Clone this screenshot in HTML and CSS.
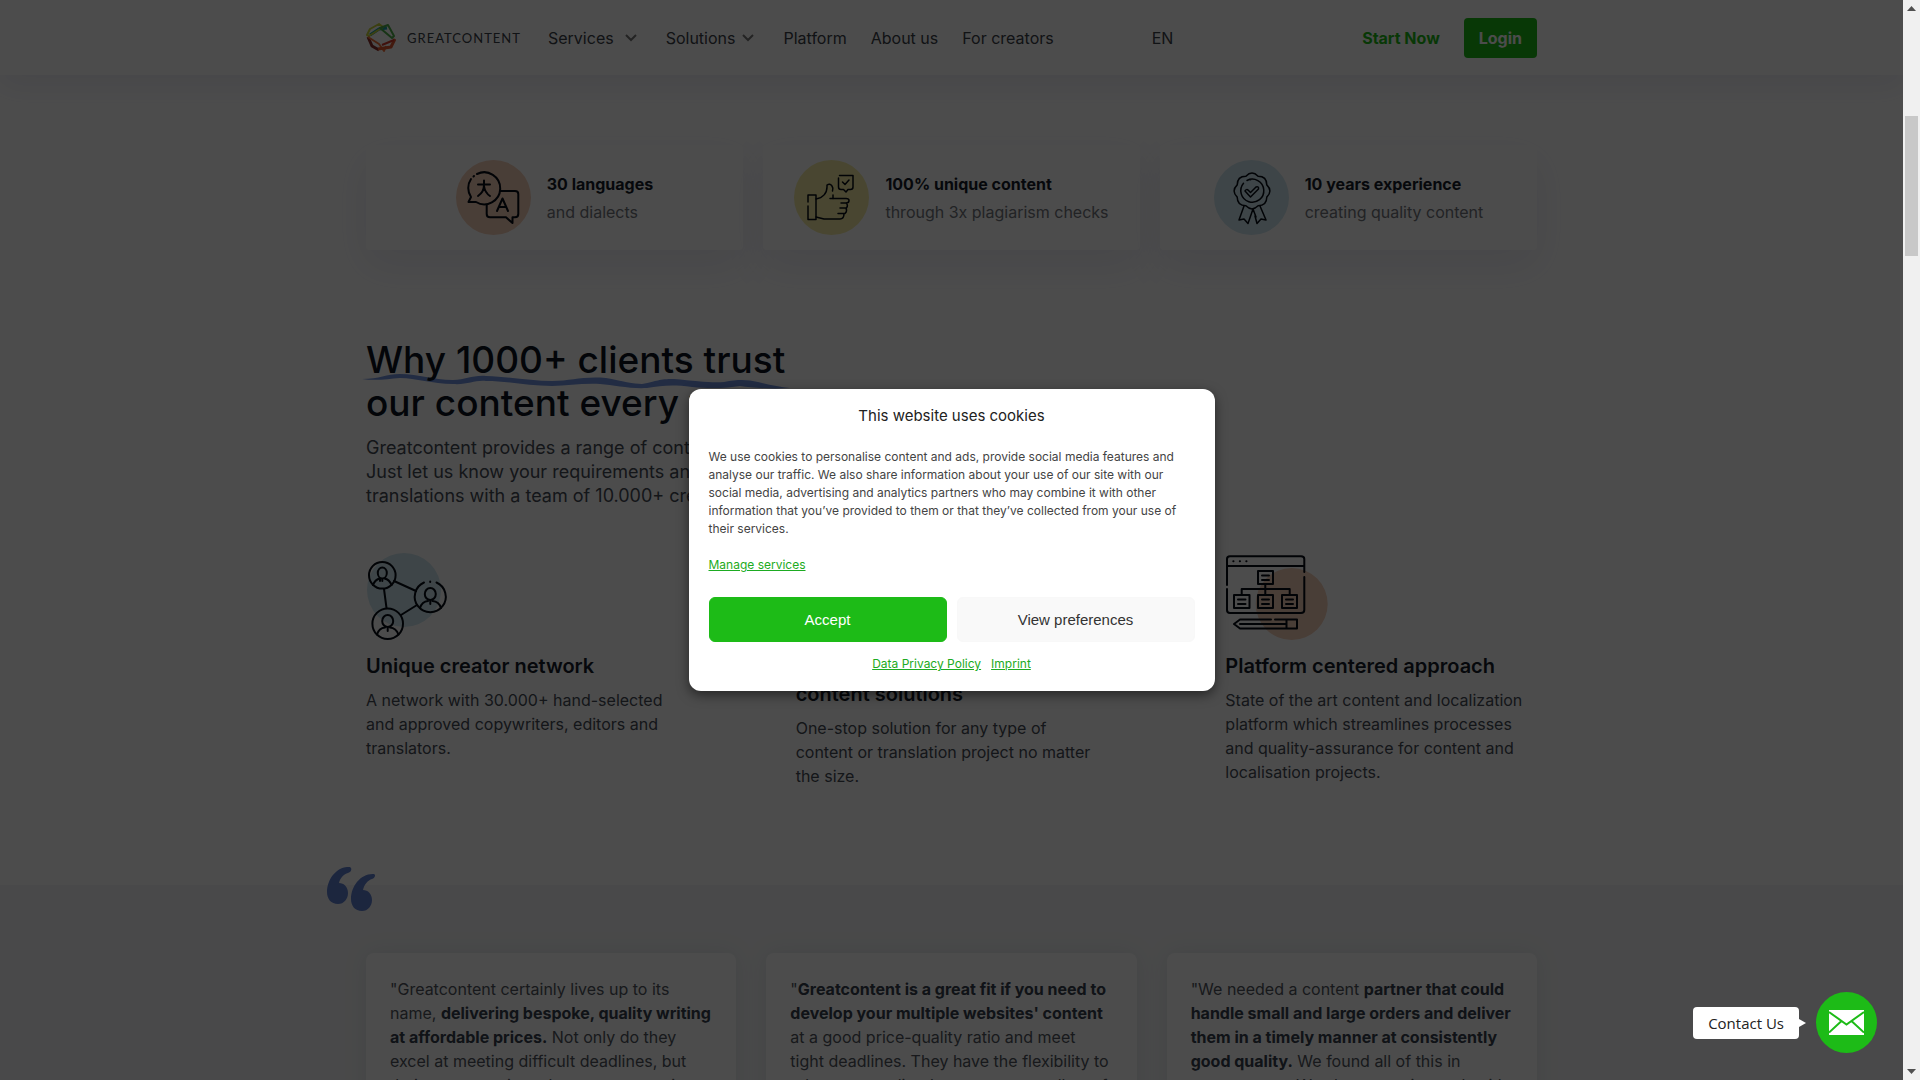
FILE: index.html
```html
<!DOCTYPE html>
<html lang="en">
<head>
  <meta charset="UTF-8">
  <meta name="viewport" content="width=device-width, initial-scale=1.0">
  <title>greatcontent</title>
  <link rel="stylesheet" href="styles.css">
</head>
<body>
<div class="page">

  <header class="header">
    <div class="container header-inner">
      <a href="#" class="logo">
        <svg width="30" height="30" viewBox="0 0 30 30" fill="none" stroke-width="2" stroke-linejoin="round">
          <path d="M4 12 L13 6 L21 5" stroke="#18a0a8" stroke-width="3"/>
          <path d="M1 12 L4 6 L13 1 L17 4 L3 13 Z" stroke="#c8d63a"/>
          <path d="M14 5 L22 2 L28 13 L26 15 Z" stroke="#4fae4a"/>
          <path d="M2 14 L6 23 L13 27" stroke="#8b2f2c" stroke-width="3"/>
          <path d="M2 14 L13 21 L18 28 L20 23" stroke="#f0713a"/>
          <path d="M29 16 L25 24 L12 26" stroke="#e2572f" stroke-width="3"/>
          <path d="M28 17 L16 22" stroke="#d33b2c"/>
        </svg>
        <span>GREATCONTENT</span>
      </a>
      <nav class="nav">
        <a href="#" class="has-sub">Services
          <svg width="14" height="8" viewBox="0 0 14 8"><path d="M2 1 L7 6 L12 1"/></svg>
        </a>
        <a href="#" class="has-sub tight">Solutions
          <svg width="14" height="8" viewBox="0 0 14 8"><path d="M2 1 L7 6 L12 1"/></svg>
        </a>
        <a href="#">Platform</a>
        <a href="#">About us</a>
        <a href="#">For creators</a>
      </nav>
      <a href="#" class="lang">EN</a>
      <div class="actions">
        <a href="#" class="start">Start Now</a>
        <a href="#" class="login">Login</a>
      </div>
    </div>
  </header>

  <main>
    <section class="container stats">
      <div class="stat">
        <svg class="stat-icon" viewBox="0 0 75 75">
          <circle class="blob orange" cx="37.500" cy="37.500" r="37.500"/>
          <path d="M21 14 A16 16 0 1 1 20 42 L12.500 42 L15 37 A16 16 0 0 1 15 19"/>
          <path d="M17.500 16.500 L18 16"/>
          <path d="M22 24.500 H34 M28 20.500 V25 C28 30 25 34 22 36 M28 26 C28.500 30 31 34 34 36"/>
          <path d="M44 31 H59 Q62.300 31 62.300 34 V54 Q62.300 57.300 59 57.300 H56.500 V63 L50 57.300 H34 Q30.700 57.300 30.700 54 V45"/>
          <path d="M41 51 L46.500 38.500 L52 51 M43 47 H50"/>
        </svg>
        <div>
          <h3>30 languages</h3>
          <p>and dialects</p>
        </div>
      </div>
      <div class="stat">
        <svg class="stat-icon thin" viewBox="0 0 75 75">
          <circle class="blob yellow" cx="37.500" cy="37.500" r="37.500"/>
          <path d="M14 42 V35 H22 V59.500 H14 V46"/>
          <path d="M22 39 C29 38 33 33 33 27 V25 Q36 23 38 26 Q39.500 28 38.500 31 M39 35 V38.500"/>
          <path d="M36 38.500 H52 Q55 38.500 55 40.500 Q55 43 52 43 H47 M52 43 Q54.500 45 52.500 48 H46 M52 48 Q53.500 51 51 53.500 H44 M50 53.500 Q50 59 46 59 H30 L22 57"/>
          <path d="M44.500 18 V27 Q44.500 29.500 47 29.500 H49.500 L52 32 L54 29.500 H56.500 Q59 29.500 59 27 V15.500 H45.500 M48.500 22 L51 24.500 L55 20"/>
        </svg>
        <div>
          <h3>100% unique content</h3>
          <p>through 3x plagiarism checks</p>
        </div>
      </div>
      <div class="stat">
        <svg class="stat-icon thin" viewBox="0 0 75 75">
          <circle class="blob blue" cx="37.500" cy="37.500" r="37.500"/>
          <g transform="translate(38 31)">
            <path d="M-6.100 -14.800 Q0 -21 6.100 -14.800 Q14.800 -14.800 14.800 -6.100 Q21 0 14.800 6.100 Q14.800 14.800 6.100 14.800 Q0 21 -6.100 14.800 Q-14.800 14.800 -14.800 6.100 Q-21 0 -14.800 -6.100 Q-14.800 -14.800 -6.100 -14.800 Z"/>
            <path d="M-5 -10.500 A11.500 11.500 0 1 1 -8.500 -7.700 M-2 -11.300 L-1 -11.500"/>
            <path d="M-7 0 Q-5.500 -2.500 -3.500 -0.500 L-1.500 1.500 L4 -4 Q7 -5 6.500 -2 L-1.500 6 Z"/>
            <path d="M-8 15 L-13 29 L-8 28 L-4 32.500 L1 18 M8 15 L14 29 L9 28 L5 32.500 L3 25 M1 18 L4 26"/>
          </g>
        </svg>
        <div>
          <h3>10 years experience</h3>
          <p>creating quality content</p>
        </div>
      </div>
    </section>

    <section class="container why">
      <h2>
        <svg class="underline" width="430" height="18" viewBox="0 0 430 18"><path d="M0 7 C18 7 24 2 38 2 C58 2 70 8 91 8 C104 8 110 3 124 4 C150 5 170 9 190 9 C210 9 220 4 244 6 C260 9 272 12 280 12 C296 9 296 7 312 7 C334 9 350 11 362 10 C378 7 386 8 396 10 C408 13 418 15 428 16 C410 17 390 16 378 14 C366 16 350 17 330 15 C308 12 300 14 285 16 C268 17 252 13 238 12 C220 11 206 14 190 14 C166 14 146 9 124 9 C112 8 106 13 91 12 C70 12 54 6 38 6 C26 7 14 9 0 7 Z"/></svg>
        Why 1000+ clients trust<br>our content every year
      </h2>
      <p class="lead">Greatcontent provides a range of content and translation services.<br>Just let us know your requirements and we deliver texts and<br>translations with a team of 10.000+ creators.</p>

      <div class="features">
        <article>
          <svg class="feature-icon" viewBox="0 0 104 88">
            <circle class="blob blue" cx="38" cy="38" r="37"/>
            <path d="M28 29 L50 39 M18 37 L20.500 56 M35 63 L51 53"/>
            <circle cx="16.300" cy="23.300" r="13.300"/>
            <ellipse cx="16.300" cy="21" rx="4.500" ry="5.500"/>
            <path d="M7 33 Q9 27.500 14 26.500 V29 M18.500 26.500 Q23.500 27.500 25.500 33 M16.300 27 V29"/>
            <path d="M58 30.500 A15.500 15.500 0 1 0 70.500 30.500"/>
            <path d="M64.200 29.500 V30"/>
            <ellipse cx="64.300" cy="42" rx="5.500" ry="6"/>
            <path d="M54 56 Q56 49.500 62 49 M66.500 49 Q73 49.500 75 56 M64.300 48.500 V52"/>
            <circle cx="21.700" cy="71.700" r="15.300"/>
            <ellipse cx="21.700" cy="69" rx="5.500" ry="6"/>
            <path d="M11 82.500 Q13 76 19 75.500 M24 75.500 Q30 76 32.500 82.500 M21.700 75.500 V79"/>
          </svg>
          <h3>Unique creator network</h3>
          <p>A network with 30.000+ hand-selected and approved copywriters, editors and translators.</p>
        </article>
        <article>
          <svg class="feature-icon" viewBox="0 0 104 88">
            <circle class="blob yellow" cx="38" cy="45" r="37"/>
            <path d="M10 20 H60 V74 H10 Z M20 34 H50 M20 46 H50 M20 58 H40"/>
          </svg>
          <h3>Customised<br>content solutions</h3>
          <p>One-stop solution for any type of content or translation project no matter the size.</p>
        </article>
        <article>
          <svg class="feature-icon" viewBox="0 0 104 88">
            <circle class="blob orange" cx="66.700" cy="52" r="36"/>
            <path d="M2 33 V7 Q2 4.300 5 4.300 H76 Q79.300 4.300 79.300 7 V20 M79.300 25 V58 Q79.300 61 76 61 H5 Q2 61 2 58 V37 M2 14 H79"/>
            <path d="M8.300 9.300 H8.500 M14.800 9.300 H15 M21.300 9.300 H21.500"/>
            <path d="M33 19 H48 V32 H33 Z M9 43 H24.500 V56 H9 Z M33 43 H48 V56 H33 Z M57 43 H72 V56 H57 Z"/>
            <path d="M37 23.500 H44 M37 28 H44 M13 47.500 H20.500 M13 52 H20.500 M37 47.500 H44 M37 52 H44 M61 47.500 H68 M61 52 H68"/>
            <path d="M40.300 32 V43 M16.700 42 V37 H64.700 V42"/>
            <path d="M72 67.500 V76.500 H15 L9 72 L15 67.500 H46 M50 67.500 H72 M61.500 67.500 V76 M15 72 H60"/>
          </svg>
          <h3>Platform centered approach</h3>
          <p>State of the art content and localization platform which streamlines processes and quality-assurance for content and localisation projects.</p>
        </article>
      </div>
    </section>

    <section class="quotes">
      <div class="container quotes-inner">
        <svg class="quote-mark" width="48" height="44" viewBox="0 0 48 44">
          <path d="M23 0 C10 -1 0 12 0 25 C0 32 4 37 11 37 C17 37 21 32 21 26 C21 20 17 16 12 16 C13 11 17 7 21 6 C25 5 25 1 23 0 Z"/>
          <path d="M47 7 C34 6 24 19 24 32 C24 39 28 44 35 44 C41 44 45 39 45 33 C45 27 41 23 36 23 C37 18 41 13 45 12 C48 11 49 8 47 7 Z"/>
        </svg>
        <blockquote>"Greatcontent certainly lives up to its name, <b>delivering bespoke, quality writing at affordable prices.</b> Not only do they excel at meeting difficult deadlines, but their team consistently stays responsive.</blockquote>
        <blockquote>"<b>Greatcontent is a great fit if you need to develop your multiple websites' content</b> at a good price-quality ratio and meet tight deadlines. They have the flexibility to adapt to any client's request, as well as of their content.</blockquote>
        <blockquote>"We needed a content <b>partner that could handle small and large orders and deliver them in a timely manner at consistently good quality.</b> We found all of this in greatcontent. We always get in touch with their team.</blockquote>
      </div>
    </section>
  </main>

  <div class="overlay">
    <div class="cookie" role="dialog" aria-labelledby="cookieTitle">
      <div class="cookie-title" id="cookieTitle">This website uses cookies</div>
      <p>We use cookies to personalise content and ads, provide social media features and analyse our traffic. We also share information about your use of our site with our social media, advertising and analytics partners who may combine it with other information that you’ve provided to them or that they’ve collected from your use of their services.</p>
      <a href="#" class="manage">Manage services</a>
      <div class="cookie-buttons">
        <button type="button" class="accept">Accept</button>
        <button type="button" class="prefs">View preferences</button>
      </div>
      <div class="cookie-links">
        <a href="#">Data Privacy Policy</a>
        <a href="#">Imprint</a>
      </div>
    </div>
  </div>

  <div class="contact">
    <span class="contact-label" id="contactLabel">Contact Us</span>
    <button type="button" class="contact-button" aria-labelledby="contactLabel">
      <svg width="35" height="25" viewBox="0 0 35 25">
        <rect width="35" height="25" fill="#fff"/>
        <path d="M0 2 L17.500 14.500 L35 2 M0 22.500 L12.500 11 M35 22.500 L22.500 11" fill="none" stroke="#1dbb17" stroke-width="2"/>
      </svg>
    </button>
  </div>
</div>

<div class="scrollbar">
  <svg width="9" height="5" viewBox="0 0 9 5"><path d="M0 5 L4.500 0 L9 5 Z"/></svg>
  <div class="thumb"></div>
  <svg width="9" height="5" viewBox="0 0 9 5"><path d="M0 0 L4.500 5 L9 0 Z"/></svg>
</div>
</body>
</html>
```
FILE: styles.css
```css
* {
  box-sizing: border-box;
}

body {
  margin: 0;
  height: 100vh;
  display: flex;
  overflow: hidden;
  font-family: Inter, "Liberation Sans", sans-serif;
  font-size: 16px;
  font-weight: 400;
  line-height: 24px;
  color: #454b55;
}

h2, h3, p, blockquote {
  margin: 0;
}

.page {
  flex: 1;
  position: relative;
  overflow: hidden;
  background: #fff;
}

.container {
  width: 100%;
  max-width: 1171px;
  margin: 0 auto;
}

/* header */
.header {
  background: #fff;
  box-shadow: 0 10px 30px rgba(80, 80, 160, 0.1);
}

.header-inner {
  display: flex;
  align-items: center;
  height: 75px;
}

.header a {
  color: #3a4048;
  text-decoration: none;
}

.logo {
  display: flex;
  align-items: center;
  gap: 11px;
  width: 182px;
  font-family: Lato, sans-serif;
  font-size: 13px;
  letter-spacing: 1px;
}

.nav {
  display: flex;
  gap: 24px;
}

.has-sub {
  display: flex;
  align-items: center;
  gap: 10px;
  margin-right: 4px;
}

.has-sub.tight {
  gap: 6px;
}

.has-sub svg {
  fill: none;
  stroke: #777;
  stroke-width: 2;
}

.lang {
  margin-left: 98px;
}

.actions {
  display: flex;
  align-items: center;
  gap: 24px;
  margin-left: auto;
  font-weight: 700;
}

.header .start {
  color: #1dbb17;
}

.header .login {
  padding: 8px 15px;
  border-radius: 4px;
  background: #1dbb17;
  color: #fff;
}

/* icons */
.stat-icon,
.feature-icon {
  fill: none;
  stroke: #060b14;
  stroke-width: 2;
  stroke-linecap: round;
  stroke-linejoin: round;
}

.thin {
  stroke-width: 1.5;
}

.blob {
  stroke: none;
}

.orange {
  fill: #f5cfb9;
}

.yellow {
  fill: #f3eca4;
}

.blue {
  fill: #d0e7f0;
}

/* stats */
.stats {
  display: grid;
  grid-template-columns: repeat(3, 1fr);
  gap: 20px;
  margin-top: 70px;
}

.stat {
  display: flex;
  justify-content: center;
  align-items: center;
  gap: 16px;
  padding: 15px;
  border-radius: 4px;
  background: #fff;
  box-shadow: 0 15px 40px rgba(80, 80, 160, 0.1);
  line-height: 28px;
  color: #72757c;
}

.stat-icon {
  width: 75px;
  height: 75px;
}

.stat h3 {
  font-size: 16px;
  font-weight: 700;
  color: #161d2a;
}

/* why */
.why {
  padding: 88px 0 97px;
}

.why h2 {
  position: relative;
  z-index: 0;
  font-size: 37px;
  font-weight: 500;
  line-height: 43px;
  color: #0b1220;
}

.underline {
  position: absolute;
  z-index: -1;
  left: -4px;
  top: 34px;
  fill: #7394e0;
}

.lead {
  margin-top: 12px;
  font-size: 18px;
}

.features {
  display: grid;
  grid-template-columns: repeat(3, 1fr);
  gap: 118px;
  margin-top: 44px;
}

.feature-icon {
  display: block;
  width: 104px;
  height: 88px;
}

.features h3 {
  margin: 12px 0 8px;
  font-size: 20px;
  font-weight: 600;
  line-height: 28px;
  color: #161d2a;
}

/* testimonials */
.quotes {
  background: #f5f6f7;
}

.quotes-inner {
  position: relative;
  display: grid;
  grid-template-columns: repeat(3, 1fr);
  gap: 30px;
  padding: 68px 0;
}

.quote-mark {
  position: absolute;
  left: -39px;
  top: -18px;
  fill: #5f7fd0;
}

blockquote {
  padding: 24px;
  border-radius: 8px;
  background: #fff;
  box-shadow: 0 0 24px rgba(60, 90, 100, 0.1);
  color: #50565e;
}

blockquote b {
  font-weight: 700;
  color: #36404e;
}

/* cookie banner */
.overlay {
  position: absolute;
  inset: 0;
  display: flex;
  justify-content: center;
  align-items: center;
  background: rgba(0, 0, 0, 0.7);
}

.cookie {
  width: 526px;
  padding: 17px 20px 16px;
  border-radius: 12px;
  background: #fff;
  box-shadow: 0 4px 12px rgba(0, 0, 0, 0.5);
  font-size: 12px;
  line-height: 18px;
  color: #444;
}

.cookie a {
  color: #1dab22;
}

.cookie-title {
  margin-bottom: 22px;
  font-size: 15px;
  line-height: 20px;
  text-align: center;
  color: #222;
}

.manage {
  display: block;
  margin: 18px 0 23px;
}

.cookie-buttons {
  display: flex;
  gap: 10px;
}

.cookie-buttons button {
  flex: 1;
  height: 45px;
  border: 1px solid #f8f8f8;
  border-radius: 6px;
  background: #f9f9f9;
  font-family: "Liberation Sans", sans-serif;
  font-size: 15px;
  color: #333;
}

.cookie-buttons .accept {
  border-color: #1dbb17;
  background: #1dbb17;
  color: #fff;
}

.cookie-links {
  display: flex;
  justify-content: center;
  gap: 10px;
  margin: 13px 0 2px;
}

/* contact widget */
.contact {
  position: absolute;
  right: 26px;
  bottom: 27px;
  display: flex;
  align-items: center;
  gap: 17px;
}

.contact-label {
  position: relative;
  padding: 4px 15px;
  border-radius: 4px;
  background: #fff;
  font-family: "Open Sans", sans-serif;
  font-size: 15px;
  color: #222;
}

.contact-label::after {
  content: "";
  position: absolute;
  left: 100%;
  top: 12px;
  border: 4px solid transparent;
  border-left: 7px solid #fff;
}

.contact-button {
  display: flex;
  justify-content: center;
  align-items: center;
  width: 61px;
  height: 61px;
  padding: 0;
  border: 0;
  border-radius: 50%;
  background: #1dbb17;
}

/* window scrollbar */
.scrollbar {
  display: flex;
  flex-direction: column;
  align-items: center;
  width: 17px;
  padding: 6px 0;
  background: #f0f0f0;
  fill: #505050;
}

.scrollbar .thumb {
  width: 13px;
  height: 13vh;
  margin: 105px 0 auto;
  background: #c8c8c8;
}
```
